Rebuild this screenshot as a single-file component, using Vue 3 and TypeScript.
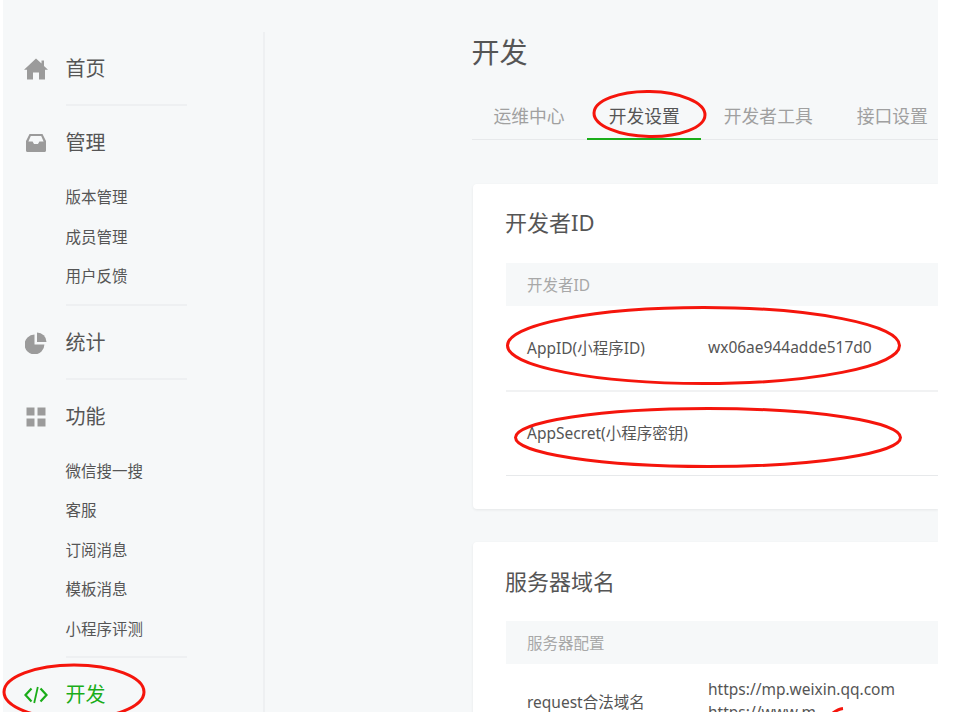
<script setup lang="ts">
interface NavGroup {
  label: string;
  icon: string;
  children: string[];
  active?: boolean;
}

const groups: NavGroup[] = [
  { label: "首页", icon: "home", children: [] },
  { label: "管理", icon: "inbox", children: ["版本管理", "成员管理", "用户反馈"] },
  { label: "统计", icon: "pie", children: [] },
  { label: "功能", icon: "grid", children: ["微信搜一搜", "客服", "订阅消息", "模板消息", "小程序评测"] },
  { label: "开发", icon: "code", children: [], active: true },
];

const tabs = ["运维中心", "开发设置", "开发者工具", "接口设置"];
</script>

<template>
  <div class="shot">
    <div class="page">
      <aside class="sidebar">
        <section v-for="group in groups" :key="group.label" class="nav-group" :class="{ active: group.active }">
          <div class="nav-title">
            <span class="nav-icon">
              <svg v-if="group.icon === 'home'" width="24" height="22" viewBox="0 0 24 22">
                <path d="M12 0.5 17.5 5.6V2.5H20V8L24 11.8H21V21.5H15V14.5H9V21.5H3V11.8H0Z" fill="#9b9b9b" />
              </svg>
              <svg v-else-if="group.icon === 'inbox'" width="22" height="20" viewBox="0 0 22 20">
                <path d="M4.5 1H17.5L21 8V17.5C21 18.4 20.4 19 19.5 19H2.5C1.6 19 1 18.4 1 17.5V8ZM5.8 3 3.4 8.4H7.6L9 11H13L14.4 8.4H18.6L16.2 3Z" fill="#9b9b9b" fill-rule="evenodd" />
              </svg>
              <svg v-else-if="group.icon === 'pie'" width="22" height="22" viewBox="0 0 22 22">
                <path d="M9.5 2.6V12.5H19.4A9.9 9.9 0 1 1 9.5 2.6Z" fill="#9b9b9b" />
                <path d="M12 0.5A9.6 9.6 0 0 1 21.5 10H12Z" fill="#9b9b9b" />
              </svg>
              <svg v-else-if="group.icon === 'grid'" width="20" height="20" viewBox="0 0 20 20" fill="#9b9b9b">
                <rect x="0.5" y="0.5" width="8" height="8" />
                <rect x="11.5" y="0.5" width="8" height="8" />
                <rect x="0.5" y="11.5" width="8" height="8" />
                <rect x="11.5" y="11.5" width="8" height="8" />
              </svg>
              <svg v-else width="24" height="18" viewBox="0 0 24 18" fill="none" stroke="#1aad19" stroke-width="2.2">
                <path d="M7.5 2.5 1.5 9 7.5 15.5" />
                <path d="M16.5 2.5 22.5 9 16.5 15.5" />
                <path d="M13.8 1 10.2 17" stroke-width="1.8" />
              </svg>
            </span>
            <span>{{ group.label }}</span>
          </div>
          <ul v-if="group.children.length" class="nav-children">
            <li v-for="child in group.children" :key="child">{{ child }}</li>
          </ul>
        </section>
      </aside>

      <main class="content">
        <h1>开发</h1>
        <nav class="tabs">
          <a v-for="tab in tabs" :key="tab" class="tab" :class="{ current: tab === '开发设置' }">{{ tab }}</a>
        </nav>

        <section class="card card-id">
          <h2>开发者ID</h2>
          <div class="table-head">开发者ID</div>
          <div class="row row-appid">
            <span class="row-label">AppID(小程序ID)</span>
            <span class="row-value">wx06ae944adde517d0</span>
          </div>
          <div class="row row-secret">
            <span class="row-label">AppSecret(小程序密钥)</span>
          </div>
        </section>

        <section class="card card-server">
          <h2>服务器域名</h2>
          <div class="table-head">服务器配置</div>
          <div class="row row-domain">
            <span class="row-label">request合法域名</span>
            <span class="row-value">
              https://mp.weixin.qq.com<br />
              https://www.m
            </span>
          </div>
        </section>
      </main>
    </div>

    <!-- hand-drawn annotations on top of the screenshot -->
    <svg class="marks" width="954" height="712" viewBox="0 0 954 712" fill="none" stroke="#f5150c" stroke-width="3">
      <ellipse cx="649.5" cy="114" rx="55.5" ry="22.5" transform="rotate(1 649.5 114)" />
      <ellipse cx="703.5" cy="345.5" rx="196" ry="38" />
      <ellipse cx="708" cy="437.5" rx="192.5" ry="29" />
      <ellipse cx="74" cy="692" rx="70" ry="27" />
      <path d="M833 713Q838 709 843 708.5" />
    </svg>
  </div>
</template>

<style scoped>
.shot {
  position: relative;
  width: 954px;
  height: 712px;
  overflow: hidden;
  background: #fff;
  color: #555;
  font-family: "Noto Sans", "Noto Sans CJK SC", sans-serif;
}
.page {
  display: flex;
  width: 935px;
  height: 712px;
  margin-left: 3px;
  overflow: hidden;
  background: #f6f8f9;
}
.sidebar {
  flex: none;
  box-sizing: border-box;
  width: 262px;
  height: 680px;
  margin-top: 32px;
  padding-top: 17px;
  border-right: 2px solid #eef0f2;
}
.nav-group {
  margin: 0 76px 17px 63px;
  padding-bottom: 15px;
  border-bottom: 2px solid #eef0f2;
}
.nav-group.active {
  border-bottom: 0;
  color: #1aad19;
}
.nav-title {
  position: relative;
  display: flex;
  align-items: center;
  height: 40px;
  margin-left: -0.5px;
  font-size: 20px;
  line-height: 40px;
}
.nav-icon {
  position: absolute;
  left: -49.5px;
  top: 0;
  display: flex;
  align-items: center;
  justify-content: center;
  width: 40px;
  height: 40px;
}
.nav-children {
  margin: 15px 0 -8px -0.5px;
  padding: 0;
  list-style: none;
  font-size: 15.5px;
  line-height: 39.5px;
}
.content {
  flex: none;
  width: 466px;
  margin-left: 207px;
}
h1 {
  margin: 0 0 0 -0.5px;
  padding-top: 32px;
  height: 40px;
  font-size: 28px;
  font-weight: 400;
  line-height: 40px;
}
.tabs {
  display: flex;
  gap: 1px;
  margin-top: 24px;
  height: 43px;
  border-bottom: 1px solid #e7e9eb;
}
.tab {
  flex: none;
  height: 43px;
  padding: 0 21.5px;
  color: #a0a0a0;
  font-size: 17.8px;
  line-height: 40px;
  white-space: nowrap;
}
.tab.current {
  height: 42px;
  color: #555;
  border-bottom: 2px solid #1aad19;
}
.card {
  box-sizing: border-box;
  margin-left: 1px;
  padding: 19px 0 0 33px;
  border-radius: 4px 0 0 4px;
  background: #fff;
  box-shadow: 0 1px 3px rgba(0, 0, 0, 0.07);
}
.card-id {
  height: 325px;
  margin-top: 44px;
}
.card-server {
  height: 200px;
  margin-top: 33px;
}
h2 {
  margin: 0 0 20px -1px;
  height: 40px;
  font-size: 22px;
  font-weight: 400;
  line-height: 40px;
}
.card-id h2 {
  margin-top: -1px;
  margin-bottom: 21px;
}
.table-head {
  height: 43px;
  padding-left: 21px;
  background: #f6f8f9;
  color: #a8a8a8;
  font-size: 15.5px;
  line-height: 44px;
}
.row {
  display: flex;
  align-items: center;
  padding-left: 21px;
  font-size: 15.5px;
}
.row-label {
  flex: none;
  width: 181px;
}
.row-appid {
  box-sizing: border-box;
  height: 86px;
  padding-bottom: 2px;
  border-bottom: 2px solid #f1f2f3;
}
.row-secret {
  box-sizing: border-box;
  height: 84px;
  padding-bottom: 2px;
  border-bottom: 1px solid #e7e9eb;
}
.row-domain {
  height: 80px;
  align-items: flex-start;
}
.row-domain .row-label {
  padding-top: 30px;
  line-height: 16px;
}
.row-domain .row-value {
  padding-top: 14px;
  line-height: 23px;
}
.marks {
  position: absolute;
  left: 0;
  top: 0;
  pointer-events: none;
}
</style>

<style>
html,
body {
  margin: 0;
  background: #fff;
}
</style>
